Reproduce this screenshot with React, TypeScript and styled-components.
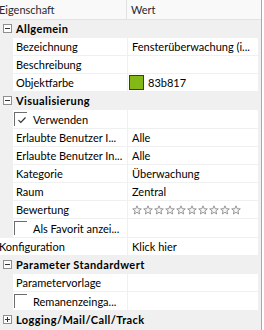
import React from 'react';
import styled, { createGlobalStyle } from 'styled-components';

const Global = createGlobalStyle`
  html, body { margin: 0; padding: 0; background: #ffffff; }
  body { font-family: Lato, "Noto Sans", sans-serif; font-size: 11px; color: #000; }
  #root { width: 264px; height: 330px; }
`;

const Frame = styled.div`
  width: 264px;
  height: 330px;
  overflow: hidden;
  display: flex;
  background: #ffffff;
`;

const Grid = styled.div`
  width: 261px;
  height: 330px;
  background: #f0f0f0;
  border-right: 1px solid #a8a8a8;
  display: flex;
  flex-direction: column;
  overflow: hidden;
`;

const Header = styled.div`
  display: grid;
  grid-template-columns: 127px 1fr;
  height: 19px;
  background: #f9f9f9;
  border-bottom: 1px solid #e2e2e2;
  color: #1f2a36;
  flex-shrink: 0;
`;

const HeaderCell = styled.div<{ $first?: boolean }>`
  display: flex;
  align-items: center;
  padding-left: ${p => (p.$first ? '0' : '4px')};
  margin-left: ${p => (p.$first ? '-1px' : '0')};
  border-right: ${p => (p.$first ? '1px solid #e2e2e2' : 'none')};
  white-space: nowrap;
  overflow: hidden;
`;

const Row = styled.div<{ $h?: number }>`
  display: grid;
  grid-template-columns: 127px 130px;
  column-gap: 1px;
  height: ${p => p.$h ?? 17}px;
  margin-bottom: 1px;
  padding-right: 3px;
  flex-shrink: 0;
`;

const LabelCell = styled.div<{ $indent: number }>`
  margin-left: ${p => p.$indent}px;
  padding-left: ${p => (p.$indent > 0 ? 3 : 0)}px;
  background: #ffffff;
  display: flex;
  align-items: center;
  white-space: nowrap;
  overflow: hidden;
  min-width: 0;
`;

const LabelText = styled.span<{ $shift?: number }>`
  margin-left: ${p => p.$shift ?? 0}px;
`;

const ValueCell = styled.div`
  background: #ffffff;
  display: flex;
  align-items: center;
  padding-left: 4px;
  white-space: nowrap;
  overflow: hidden;
  gap: 4px;
`;

const CategoryRow = styled.div`
  height: 17px;
  margin-bottom: 1px;
  display: flex;
  align-items: center;
  flex-shrink: 0;
  font-weight: 700;
  letter-spacing: 0.4px;
  white-space: nowrap;
  overflow: hidden;
`;

const Expander = styled.span`
  position: relative;
  width: 9px;
  height: 9px;
  box-sizing: border-box;
  border: 1px solid #8f8f8f;
  background: #fdfdfd;
  margin-left: 3px;
  margin-right: 4px;
  flex-shrink: 0;
  &::before {
    content: '';
    position: absolute;
    left: 1px;
    top: 3px;
    width: 5px;
    height: 1px;
    background: #333;
  }
`;

const ExpanderPlus = styled(Expander)`
  &::after {
    content: '';
    position: absolute;
    left: 3px;
    top: 1px;
    width: 1px;
    height: 5px;
    background: #333;
  }
`;

const CheckBox = styled.span`
  position: relative;
  width: 13px;
  height: 14px;
  box-sizing: border-box;
  border-top: 1px solid #6d6d6d;
  border-left: 1px solid #6d6d6d;
  margin-left: -2px;
  margin-right: 6px;
  flex-shrink: 0;
`;

const Swatch = styled.span<{ $color: string }>`
  width: 15px;
  height: 15px;
  box-sizing: border-box;
  border: 1px solid #3a3a3a;
  background: ${p => p.$color};
  margin-left: -3px;
  flex-shrink: 0;
`;

const Stars = styled.div`
  display: flex;
  gap: 1px;
  align-items: center;
`;

const Check = () => (
  <svg width="10" height="10" viewBox="0 0 10 10" style={{ position: 'absolute', left: 2, top: 2 }}>
    <path d="M1.5 5.2 L3.8 7.5 L8.5 2.5" fill="none" stroke="#333" strokeWidth="1.2" />
  </svg>
);

const Star = () => (
  <svg width="10" height="10" viewBox="0 0 10 10">
    <path
      d="M5 0.8 L6.2 3.7 L9.3 3.9 L6.9 5.9 L7.7 9 L5 7.3 L2.3 9 L3.1 5.9 L0.7 3.9 L3.8 3.7 Z"
      fill="#f6f6f6"
      stroke="#8c8c8c"
      strokeWidth="0.9"
      strokeLinejoin="round"
    />
  </svg>
);

type Item =
  | { kind: 'cat'; label: string; open: boolean }
  | { kind: 'prop'; label: string; value?: React.ReactNode; indent?: number; shift?: number }
  | { kind: 'check'; label: string; checked: boolean };

const items: Item[] = [
  { kind: 'cat', label: 'Allgemein', open: true },
  { kind: 'prop', label: 'Bezeichnung', value: 'Fensterüberwachung (i...' },
  { kind: 'prop', label: 'Beschreibung', value: '' },
  { kind: 'prop', label: 'Objektfarbe', value: 'color' },
  { kind: 'cat', label: 'Visualisierung', open: true },
  { kind: 'check', label: 'Verwenden', checked: true },
  { kind: 'prop', label: 'Erlaubte Benutzer I...', value: 'Alle' },
  { kind: 'prop', label: 'Erlaubte Benutzer In...', value: 'Alle' },
  { kind: 'prop', label: 'Kategorie', value: 'Überwachung' },
  { kind: 'prop', label: 'Raum', value: 'Zentral' },
  { kind: 'prop', label: 'Bewertung', value: 'stars' },
  { kind: 'check', label: 'Als Favorit anzei...', checked: false },
  { kind: 'prop', label: 'Konfiguration', value: 'Klick hier', indent: 0, shift: -1 },
  { kind: 'cat', label: 'Parameter Standardwert', open: true },
  { kind: 'prop', label: 'Parametervorlage', value: '' },
  { kind: 'check', label: 'Remanenzeinga...', checked: false },
  { kind: 'cat', label: 'Logging/Mail/Call/Track', open: false },
];

const renderValue = (v: React.ReactNode) => {
  if (v === 'color')
    return (
      <>
        <Swatch $color="#83b817" />
        <span>83b817</span>
      </>
    );
  if (v === 'stars')
    return (
      <Stars>
        {Array.from({ length: 10 }).map((_, i) => (
          <Star key={i} />
        ))}
      </Stars>
    );
  return v;
};

export default function App() {
  return (
    <>
      <Global />
      <Frame>
        <Grid>
          <Header>
            <HeaderCell $first>Eigenschaft</HeaderCell>
            <HeaderCell>Wert</HeaderCell>
          </Header>
          {items.map((it, i) => {
            if (it.kind === 'cat')
              return (
                <CategoryRow key={i}>
                  {it.open ? <Expander /> : <ExpanderPlus />}
                  <span>{it.label}</span>
                </CategoryRow>
              );
            if (it.kind === 'check')
              return (
                <Row key={i} $h={18}>
                  <LabelCell $indent={13}>
                    <CheckBox>{it.checked && <Check />}</CheckBox>
                    <span>{it.label}</span>
                  </LabelCell>
                  <ValueCell />
                </Row>
              );
            return (
              <Row key={i}>
                <LabelCell $indent={it.indent ?? 13}>
                  <LabelText $shift={it.shift}>{it.label}</LabelText>
                </LabelCell>
                <ValueCell>{renderValue(it.value)}</ValueCell>
              </Row>
            );
          })}
        </Grid>
      </Frame>
    </>
  );
}
